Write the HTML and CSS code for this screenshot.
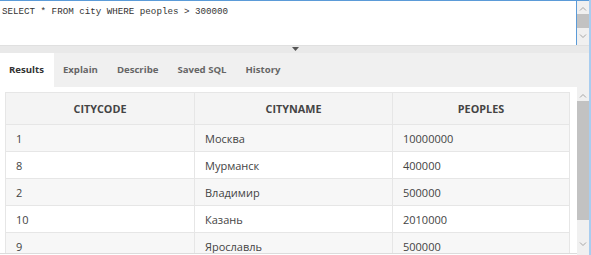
FILE: index.html
```html
<!DOCTYPE html>
<html lang="en">

<head>
    <meta charset="UTF-8">
    <meta name="viewport" content="width=device-width, initial-scale=1.0">
    <link rel="stylesheet" href="styles.css">
    <title>SQL Console</title>
</head>

<body>
    <div class="window">
        <!-- SQL editor -->
        <div class="editor">
            <div class="sql">SELECT * FROM city WHERE peoples &gt; 300000</div>
            <div class="vscroll editor-scroll">
                <svg class="arrow" width="12" height="8" viewBox="0 0 12 8"><path d="M3 5.5 L6 2.5 L9 5.5" fill="none" stroke="#a6a6a6" stroke-width="1"/></svg>
                <div class="thumb editor-thumb"></div>
                <div class="track"></div>
                <svg class="arrow" width="12" height="8" viewBox="0 0 12 8"><path d="M3 2.5 L6 5.5 L9 2.5" fill="none" stroke="#a6a6a6" stroke-width="1"/></svg>
            </div>
        </div>

        <!-- splitter -->
        <div class="splitter">
            <svg width="7" height="4" viewBox="0 0 7 4"><path d="M0 0 H7 L3.5 4 Z" fill="#555"/></svg>
        </div>

        <!-- tabs -->
        <div class="tabs">
            <div class="tab active">Results</div>
            <div class="tab">Explain</div>
            <div class="tab">Describe</div>
            <div class="tab">Saved SQL</div>
            <div class="tab">History</div>
        </div>

        <!-- results grid -->
        <div class="results">
            <div class="grid-wrap">
                <table class="grid">
                    <thead>
                        <tr>
                            <th class="col-code">CITYCODE</th>
                            <th class="col-name">CITYNAME</th>
                            <th class="col-people">PEOPLES</th>
                        </tr>
                    </thead>
                    <tbody>
                        <tr><td>1</td><td>Москва</td><td>10000000</td></tr>
                        <tr><td>8</td><td>Мурманск</td><td>400000</td></tr>
                        <tr><td>2</td><td>Владимир</td><td>500000</td></tr>
                        <tr><td>10</td><td>Казань</td><td>2010000</td></tr>
                        <tr><td>9</td><td>Ярославль</td><td>500000</td></tr>
                    </tbody>
                </table>
            </div>
            <div class="vscroll grid-scroll">
                <svg class="arrow" width="12" height="8" viewBox="0 0 12 8"><path d="M3 5.5 L6 2.5 L9 5.5" fill="none" stroke="#a6a6a6" stroke-width="1"/></svg>
                <div class="thumb grid-thumb"></div>
                <div class="track"></div>
                <svg class="arrow" width="12" height="8" viewBox="0 0 12 8"><path d="M3 2.5 L6 5.5 L9 2.5" fill="none" stroke="#a6a6a6" stroke-width="1"/></svg>
            </div>
        </div>
    </div>
</body>

</html>
```

FILE: styles.css
```css
html, body {
  margin: 0;
  padding: 0;
}

body {
  font-family: "Open Sans", "Noto Sans", Arial, sans-serif;
  background-color: #fff;
  color: #444;
  overflow: hidden;
}

.window {
  width: 589px;
  height: 255px;
  border-right: 2px solid #a8cdf0;
  display: flex;
  flex-direction: column;
  overflow: hidden;
}

/* editor */
.editor {
  display: flex;
  height: 44px;
  border-top: 1px solid #5b9bd8;
  flex-shrink: 0;
}

.sql {
  flex: 1;
  border-right: 1px solid #5b9bd8;
  font-family: "Liberation Mono", "DejaVu Sans Mono", monospace;
  font-size: 9.2px;
  color: #333;
  padding: 5px 0 0 2px;
  white-space: pre;
}

.vscroll {
  width: 12px;
  background-color: #f0f0f0;
  display: flex;
  flex-direction: column;
  align-items: center;
  flex-shrink: 0;
}

.arrow {
  display: block;
  flex-shrink: 0;
}

.editor-scroll {
  padding-top: 4px;
}

.editor-thumb {
  height: 14px;
  margin-top: 1px;
}

.thumb {
  width: 12px;
  background-color: #c2c2c2;
  flex-shrink: 0;
}

.track {
  flex: 1;
}

.editor-scroll .arrow:last-child {
  margin-bottom: 5px;
}

/* splitter */
.splitter {
  height: 6px;
  background-color: #e9e9e9;
  border-top: 1px solid #e0e0e0;
  display: flex;
  justify-content: center;
  align-items: flex-start;
  padding-top: 1px;
  flex-shrink: 0;
}

.splitter svg {
  display: block;
  margin-left: 2px;
}

/* tabs */
.tabs {
  display: flex;
  height: 34px;
  background-color: #f0f0f0;
  flex-shrink: 0;
}

.tab {
  padding: 0 10px 0 9px;
  line-height: 33px;
  font-size: 9.6px;
  font-weight: bold;
  color: #666;
}

.tab.active {
  background-color: #fff;
  color: #333;
}

/* results */
.results {
  display: flex;
  height: 171px;
  flex-shrink: 0;
}

.grid-wrap {
  flex: 1;
  overflow: hidden;
  border-bottom: 1px solid #dcdcdc;
  padding: 5px 6px 0 5px;
  box-sizing: border-box;
  height: 167px;
}

.grid {
  border-collapse: collapse;
  width: 565px;
  table-layout: fixed;
  font-size: 11px;
}

.grid th,
.grid td {
  border: 1px solid #e6e6e6;
  text-align: left;
  color: #444;
}

.grid th {
  height: 31px;
  text-align: center;
  font-weight: bold;
  font-size: 10.8px;
  background-color: #f4f4f4;
  padding: 0;
}

.grid td {
  height: 26px;
  padding: 0 0 0 10px;
}

.grid tbody tr:nth-child(odd) td {
  background-color: #f7f7f7;
}

.col-code {
  width: 188px;
}

.col-name {
  width: 197px;
}

.col-people {
  width: 176px;
}

.grid-scroll {
  padding-top: 5px;
}

.grid-thumb {
  height: 119px;
  margin-top: 1px;
}

.grid-scroll .arrow:last-child {
  margin-bottom: 10px;
}
```
